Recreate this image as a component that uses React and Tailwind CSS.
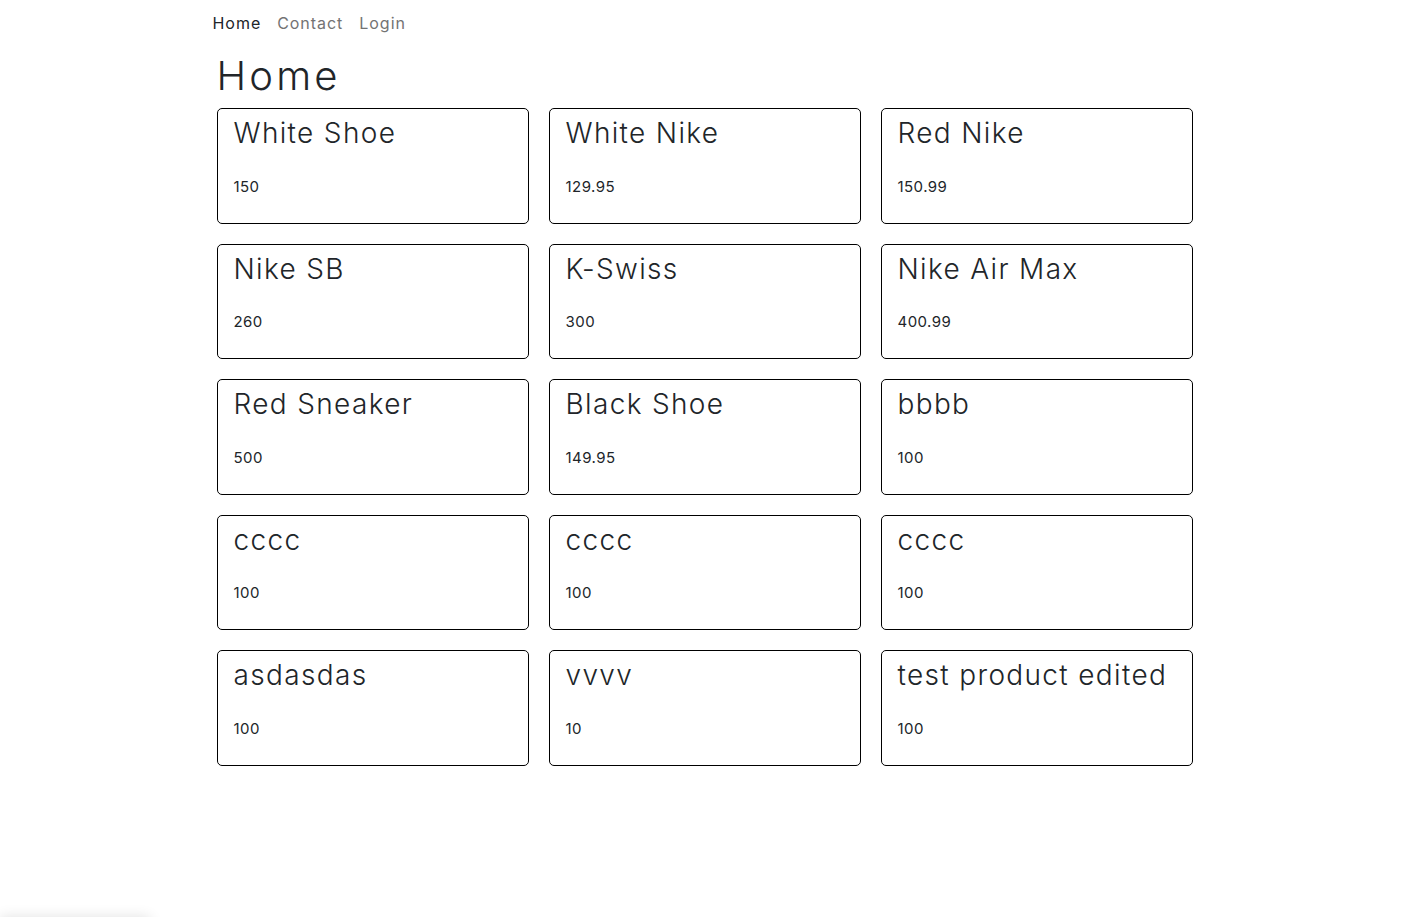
import React from "react";

const products = [
  ["White Shoe", "150"],
  ["White Nike", "129.95"],
  ["Red Nike", "150.99"],
  ["Nike SB", "260"],
  ["K-Swiss", "300"],
  ["Nike Air Max", "400.99"],
  ["Red Sneaker", "500"],
  ["Black Shoe", "149.95"],
  ["bbbb", "100"],
  ["cccc", "100"],
  ["cccc", "100"],
  ["cccc", "100"],
  ["asdasdas", "100"],
  ["vvvv", "10"],
  ["test product edited", "100"],
];

export default function App() {
  return (
    <div
      className="min-h-[917px] bg-white text-[#212529]"
      style={{ fontFamily: "Inter, 'Open Sans', sans-serif" }}
    >
      <nav className="w-[984px] mx-auto pt-[11px] flex gap-[16px] text-[16px] leading-[24px] tracking-[0.06em]">
        <a className="text-[#212529]">Home</a>
        <a className="text-[#737373]">Contact</a>
        <a className="text-[#737373]">Login</a>
      </nav>
      <main className="w-[976px] mx-auto">
        <h1 className="mt-[17px] text-[40px] leading-[48px] font-light tracking-[0.08em]">Home</h1>
        <div className="mt-[8px] grid grid-cols-3 gap-x-[20px] gap-y-[20px]">
          {products.map(([name, price], i) => (
            <div
              key={i}
              className="h-[115.5px] border border-black rounded-[5px] px-4 pt-[8px] flex flex-col"
            >
              <h3 className="text-[28px] leading-[33.6px] font-light tracking-[0.048em]">{name}</h3>
              <p className="mt-[24px] text-[15px] leading-[24px] tracking-[0.03em]">{price}</p>
            </div>
          ))}
        </div>
      </main>
      <div className="fixed left-0 bottom-0 w-[150px] h-[40px] translate-y-full bg-white shadow-[0_0_14px_rgba(0,0,0,0.12)]" />
    </div>
  );
}
